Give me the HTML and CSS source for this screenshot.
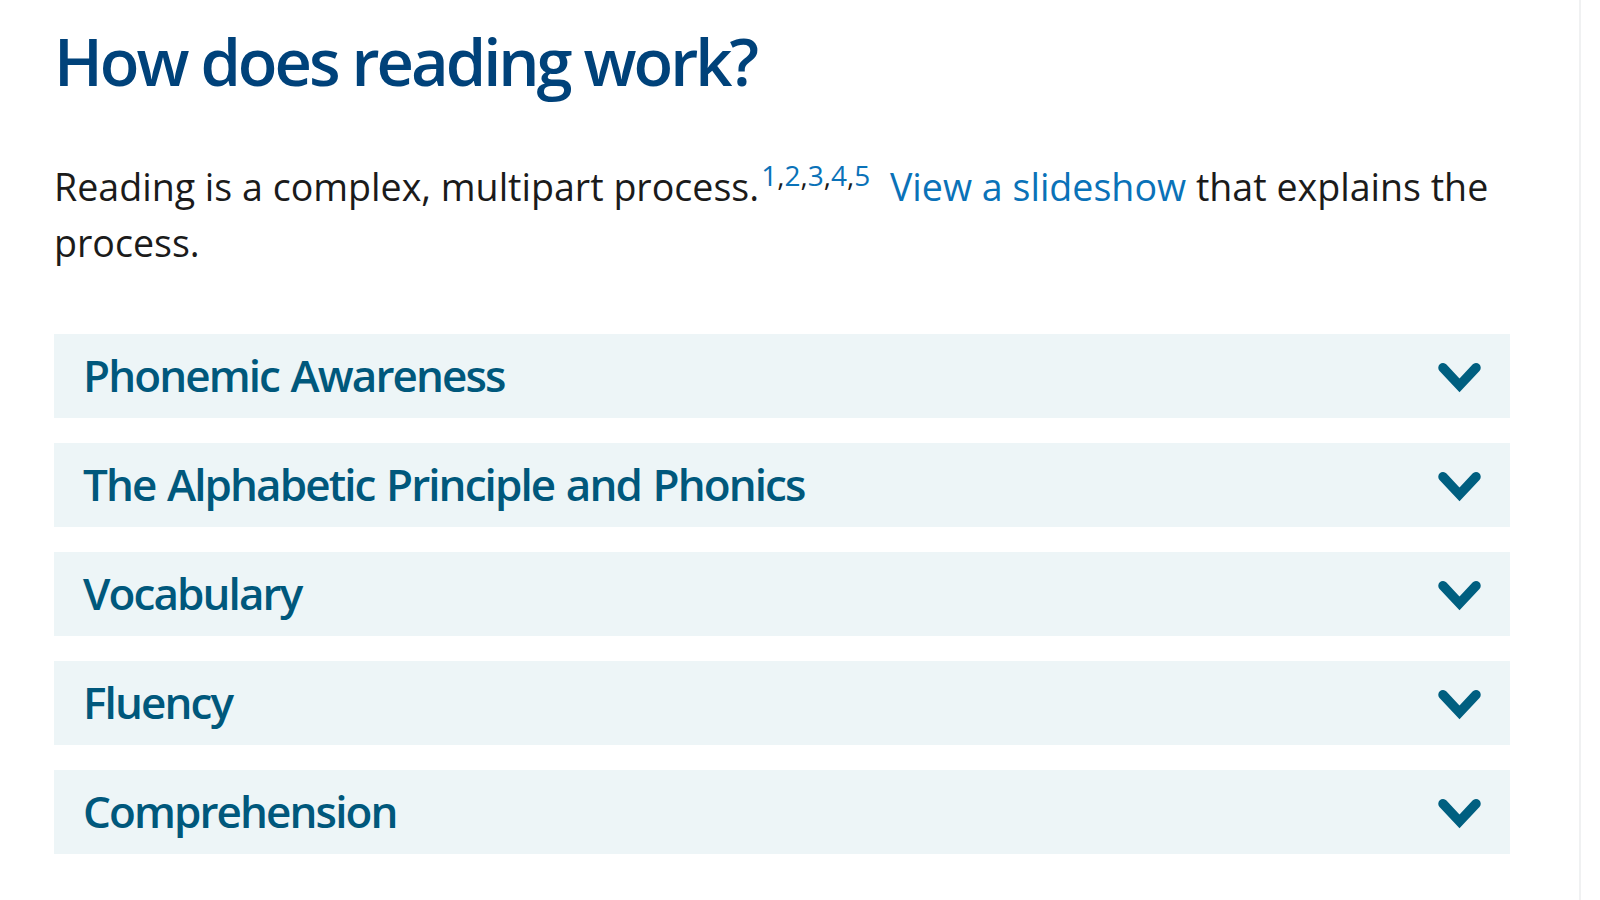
FILE: index.html
```html
<!DOCTYPE html>
<html lang="en">
<head>
    <meta charset="UTF-8">
    <meta name="viewport" content="width=device-width, initial-scale=1.0">
    <title>How does reading work?</title>
    <link rel="stylesheet" href="styles.css">
</head>
<body>

    <div class="page">
        <h1>How does reading work?</h1>

        <p class="intro">Reading is a complex, multipart process.<sup><a href="#">1</a>,<a href="#">2</a>,<a href="#">3</a>,<a href="#">4</a>,<a href="#">5</a></sup> <a href="#">View a slideshow</a> that explains the process.</p>

        <div class="accordion">
            <button class="acc-item">
                <span>Phonemic Awareness</span>
                <svg class="chevron" viewBox="0 0 43 30"><path d="M5 4.8 L21.5 22.4 L38 4.8"/></svg>
            </button>
            <button class="acc-item">
                <span>The Alphabetic Principle and Phonics</span>
                <svg class="chevron" viewBox="0 0 43 30"><path d="M5 4.8 L21.5 22.4 L38 4.8"/></svg>
            </button>
            <button class="acc-item">
                <span>Vocabulary</span>
                <svg class="chevron" viewBox="0 0 43 30"><path d="M5 4.8 L21.5 22.4 L38 4.8"/></svg>
            </button>
            <button class="acc-item">
                <span>Fluency</span>
                <svg class="chevron" viewBox="0 0 43 30"><path d="M5 4.8 L21.5 22.4 L38 4.8"/></svg>
            </button>
            <button class="acc-item">
                <span>Comprehension</span>
                <svg class="chevron" viewBox="0 0 43 30"><path d="M5 4.8 L21.5 22.4 L38 4.8"/></svg>
            </button>
        </div>
    </div>

</body>
</html>
```

FILE: styles.css
```css
* {
    margin: 0;
    padding: 0;
    box-sizing: border-box;
}

body {
    font-family: 'Open Sans', sans-serif;
    background: #fff;
    color: #1b1b1b;
}

.page {
    width: 1581px;
    min-height: 900px;
    padding: 21px 69px 0 54px;
    border-right: 2px solid #f0f1f2;
}

h1 {
    font-size: 65px;
    font-weight: 600;
    color: #00427a;
    line-height: 80px;
    letter-spacing: -3px;
}

.intro {
    margin-top: 58px;
    font-size: 37.6px;
    line-height: 56px;
}

.intro a {
    color: #0a72b8;
    text-decoration: none;
}

.intro sup {
    font-size: 28px;
    line-height: 0;
    vertical-align: 15px;
    margin-right: 10px;
    margin-left: 2px;
}

.accordion {
    margin-top: 63px;
    display: flex;
    flex-direction: column;
    gap: 25px;
}

.acc-item {
    display: flex;
    align-items: center;
    justify-content: space-between;
    height: 84px;
    padding: 0 29px 3px 29px;
    border: none;
    background: #edf5f7;
    font-family: 'Open Sans', sans-serif;
    font-size: 44px;
    font-weight: 600;
    letter-spacing: -1.9px;
    word-spacing: 2px;
    color: #00587c;
    text-align: left;
    cursor: pointer;
}

.chevron {
    width: 43px;
    height: 30px;
    margin-top: 7px;
    fill: none;
    stroke: #005f80;
    stroke-width: 9.5;
    stroke-linecap: round;
    stroke-linejoin: miter;
}
```
